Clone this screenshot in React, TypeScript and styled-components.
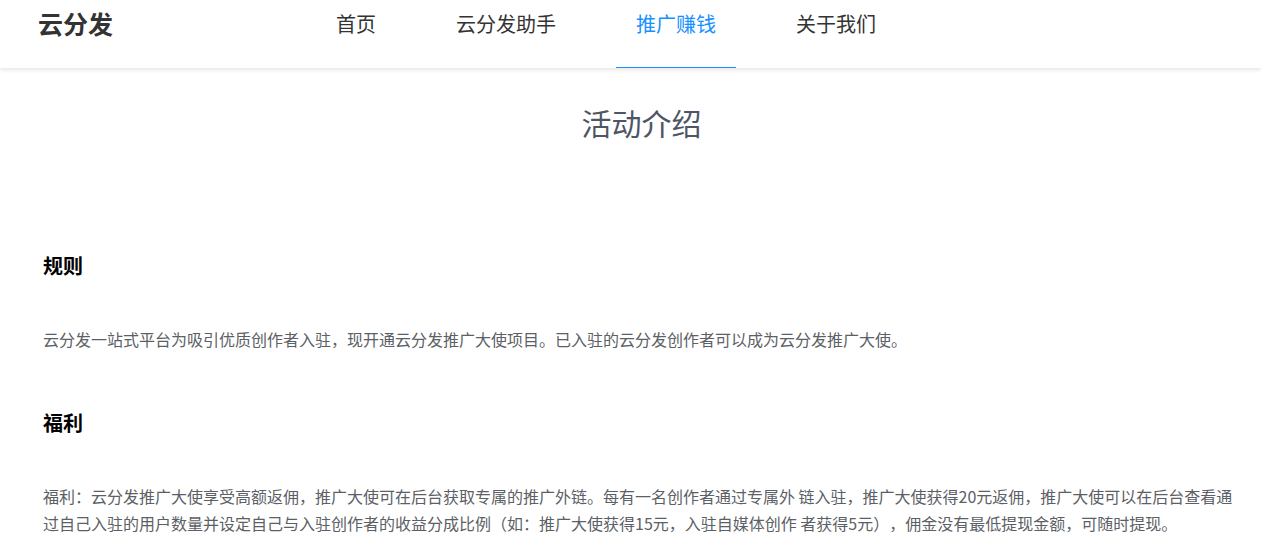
import React from 'react';
import styled, { createGlobalStyle } from 'styled-components';

const GlobalStyle = createGlobalStyle`
  * {
    margin: 0;
    padding: 0;
    box-sizing: border-box;
  }
  body {
    background: #fff;
    font-family: "Noto Sans CJK SC", "Noto Sans", sans-serif;
    text-spacing-trim: space-all;
  }
`;

const Header = styled.header`
  display: flex;
  align-items: flex-start;
  height: 68px;
  padding-left: 38px;
  background: #fff;
  box-shadow: 0 2px 4px rgba(0, 0, 0, 0.1);
  position: relative;
  z-index: 1;
`;

const Logo = styled.div`
  width: 278px;
  line-height: 46px;
  font-size: 25px;
  font-weight: 700;
  color: #333;
`;

const Nav = styled.nav`
  display: flex;
  gap: 40px;
`;

const NavItem = styled.a<{ $active?: boolean }>`
  display: block;
  height: 68px;
  padding: 0 20px;
  line-height: 48px;
  font-size: 20px;
  color: ${(p) => (p.$active ? '#1890ff' : '#333')};
  border-bottom: 1px solid ${(p) => (p.$active ? '#1890ff' : 'transparent')};
  text-decoration: none;
  cursor: pointer;
`;

const Title = styled.h1`
  margin-top: 34px;
  padding-left: 22px;
  text-align: center;
  font-size: 30px;
  line-height: 40px;
  font-weight: 400;
  color: #4f5565;
`;

const Content = styled.main`
  padding: 110px 20px 0 43px;
`;

const Section = styled.section`
  & + & {
    margin-top: 56px;
  }
`;

const Heading = styled.h3`
  font-size: 20px;
  line-height: 28px;
  font-weight: 700;
  color: #000;
  margin-bottom: 46px;
`;

const Paragraph = styled.p`
  font-size: 16px;
  line-height: 27px;
  color: #5c5f66;
`;

const navItems = ['首页', '云分发助手', '推广赚钱', '关于我们'];

const App: React.FC = () => {
  return (
    <>
      <GlobalStyle />
      <Header>
        <Logo>云分发</Logo>
        <Nav>
          {navItems.map((item) => (
            <NavItem key={item} $active={item === '推广赚钱'}>
              {item}
            </NavItem>
          ))}
        </Nav>
      </Header>
      <Title>活动介绍</Title>
      <Content>
        <Section>
          <Heading>规则</Heading>
          <Paragraph>
            云分发一站式平台为吸引优质创作者入驻，现开通云分发推广大使项目。已入驻的云分发创作者可以成为云分发推广大使。
          </Paragraph>
        </Section>
        <Section>
          <Heading>福利</Heading>
          <Paragraph>
            福利：云分发推广大使享受高额返佣，推广大使可在后台获取专属的推广外链。每有一名创作者通过专属外 链入驻，推广大使获得20元返佣，推广大使可以在后台查看通过自己入驻的用户数量并设定自己与入驻创作者的收益分成比例（如：推广大使获得15元，入驻自媒体创作 者获得5元），佣金没有最低提现金额，可随时提现。
          </Paragraph>
        </Section>
      </Content>
    </>
  );
};

export default App;
